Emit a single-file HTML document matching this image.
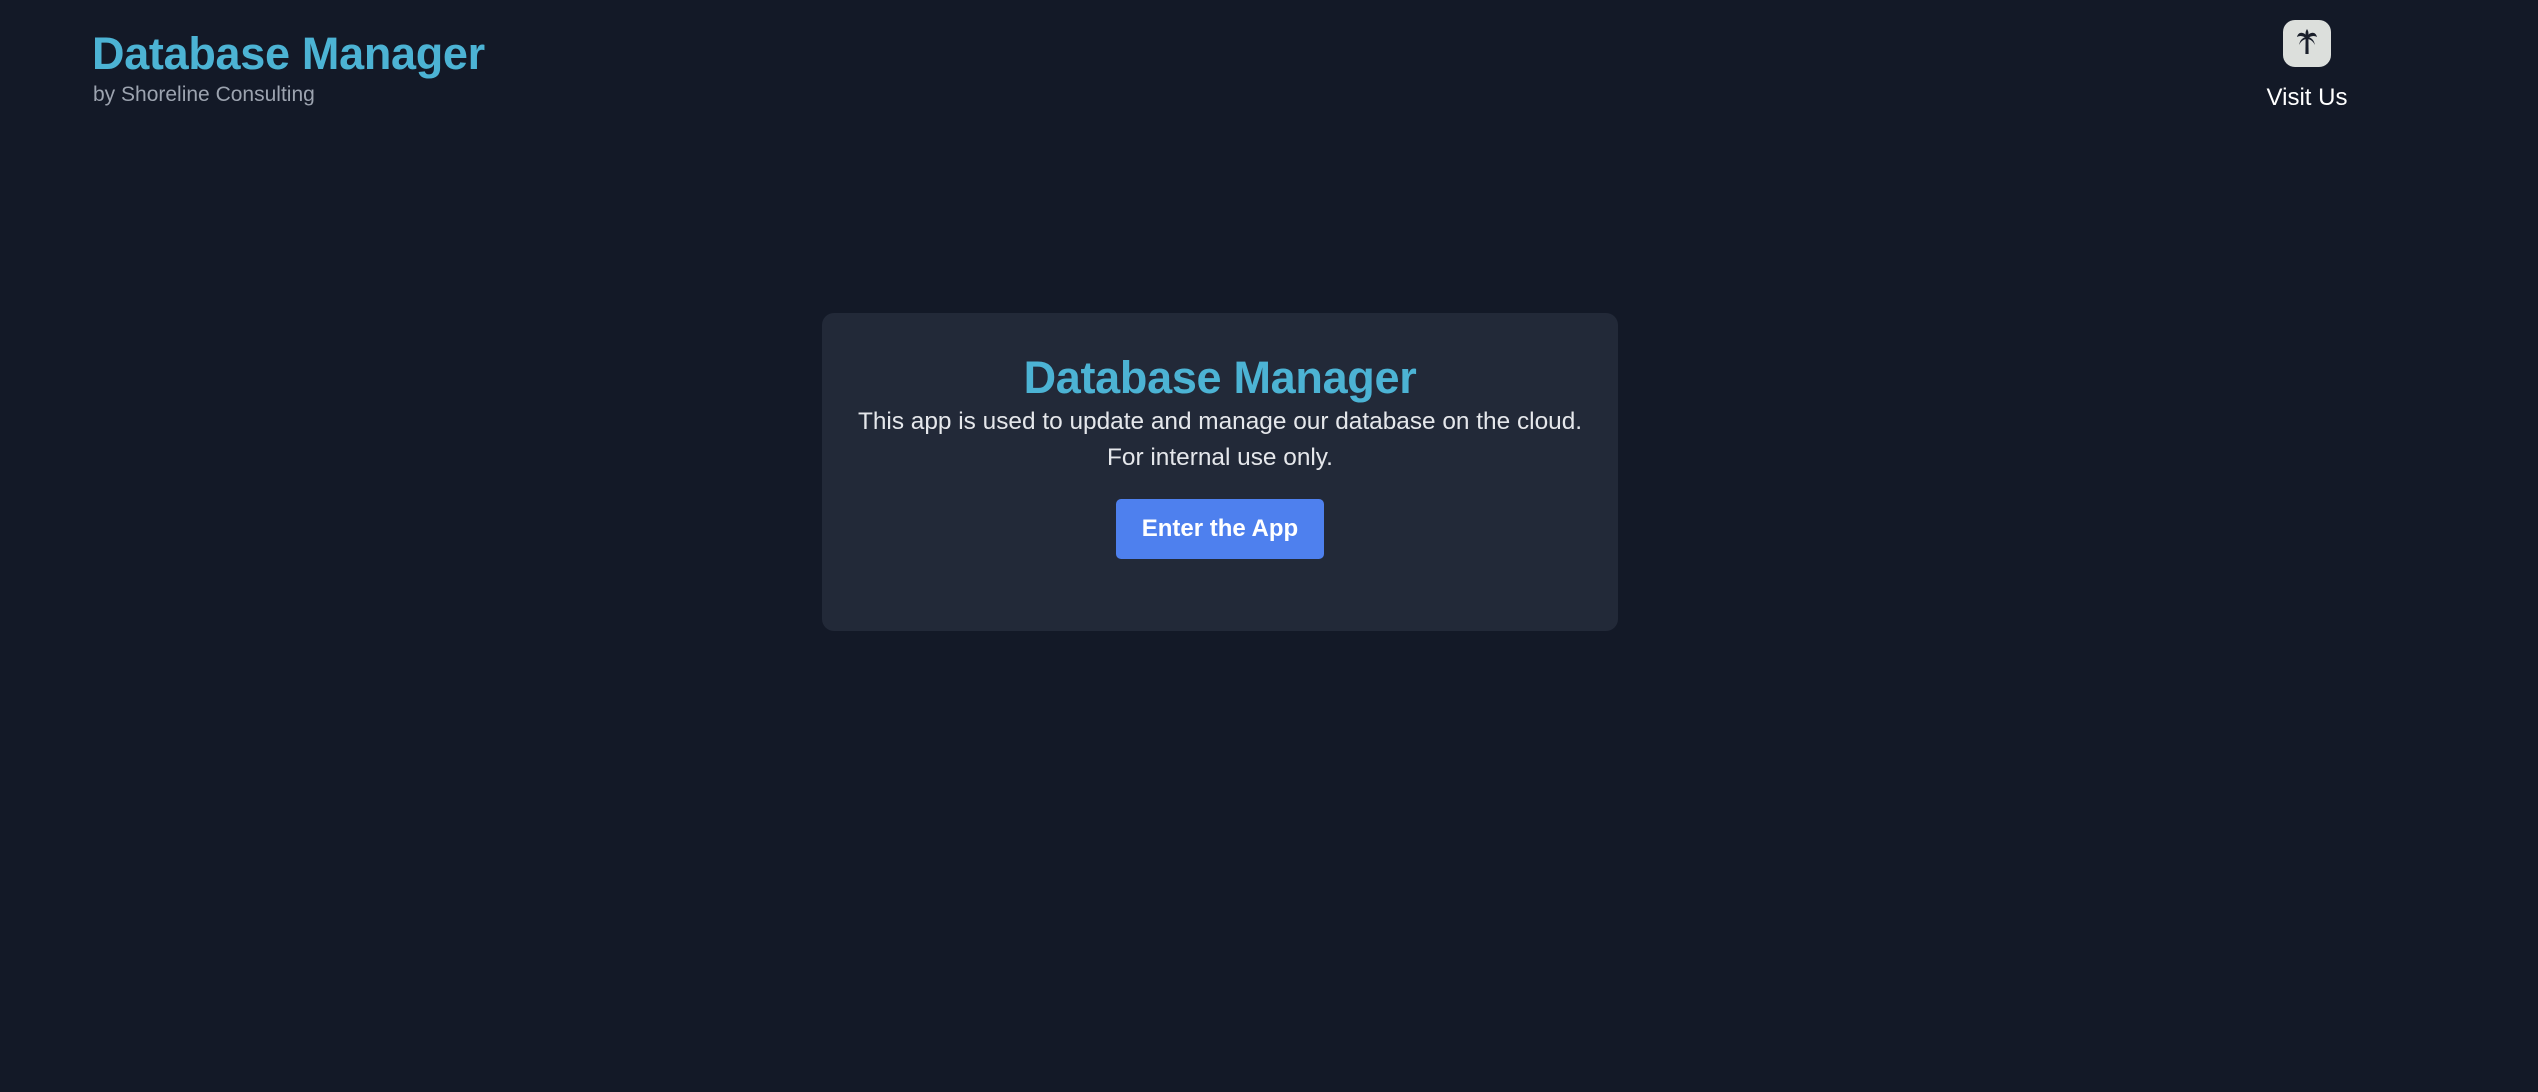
<!DOCTYPE html>
<html><head><meta charset="utf-8"><style>
html,body{margin:0;padding:0;width:2538px;height:1092px;background:#131927;overflow:hidden;font-family:"Liberation Sans",sans-serif}
.t{position:absolute;left:92px;top:28px;font-size:45px;font-weight:bold;color:#4cb3d4;letter-spacing:-0.3px;white-space:nowrap}
.s{position:absolute;left:93px;top:83px;font-size:21px;color:#9ca3af;white-space:nowrap}
.ic{position:absolute;left:2283px;top:20px;width:48px;height:47px;border-radius:12px;background:#dcdfdc}
.v{position:absolute;left:2246px;width:122px;text-align:center;top:84px;font-size:24px;color:#fff}
.card{position:absolute;left:822px;top:313px;width:796px;height:318px;background:#222938;border-radius:12px}
.ct{position:absolute;left:822px;width:796px;top:352px;text-align:center;font-size:45px;font-weight:bold;color:#4cb3d4;letter-spacing:-0.3px}
.p{position:absolute;left:822px;width:796px;text-align:center;font-size:24.4px;color:#e5e7eb;white-space:nowrap}
.btn{position:absolute;left:1116px;top:499px;width:208px;height:60px;background:#4e80ee;border-radius:5px;color:#fff;font-weight:bold;font-size:24px;text-align:center;line-height:60px}
</style></head><body>
<div class="t">Database Manager</div>
<div class="s">by Shoreline Consulting</div>
<div class="ic"><svg width="48" height="47" viewBox="0 0 48 47"><g fill="#1a1f2b"><path d="M22.6 18 L25.4 18 L25.6 34 L22.4 34 Z"/><path d="M24 16 C20 11 15 12 14 17 C17 15 21 16 24 19 Z"/><path d="M24 16 C28 11 33 12 34 17 C31 15 27 16 24 19 Z"/><path d="M24 17 C20 17 17 20 16 25 C18 21 21 19 24 19 Z"/><path d="M24 17 C28 17 31 20 32 25 C30 21 27 19 24 19 Z"/><path d="M24 19 C22 15 22 12 24 9 C26 12 26 15 24 19 Z"/></g></svg></div>
<div class="v">Visit Us</div>
<div class="card"></div>
<div class="ct">Database Manager</div>
<div class="p" style="top:408px">This app is used to update and manage our database on the cloud.</div>
<div class="p" style="top:444px">For internal use only.</div>
<div class="btn">Enter the App</div>
</body></html>
